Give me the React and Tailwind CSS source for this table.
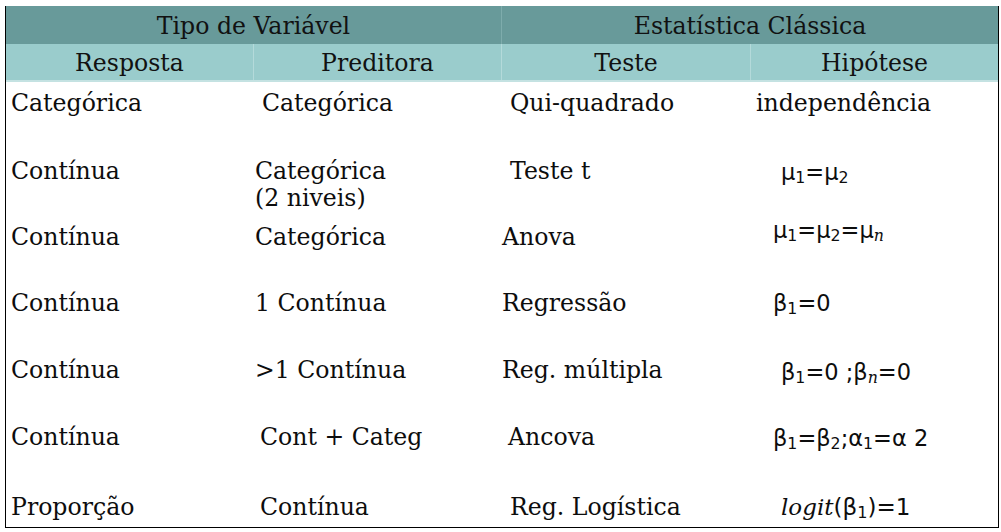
import React from 'react';

const rows = [
  { h: 'h-[67px]', pt: 'pt-[8px]', a: 'Categórica', b: 'Categórica', bx: 'pl-[8px]', c: 'Qui-quadrado', cx: 'pl-[8px]', d: 'independência', dx: 'pl-[5px]', serifD: true },
  { h: 'h-[66px]', pt: 'pt-[9px]', a: 'Contínua', b: 'Categórica\n(2 niveis)', bx: 'pl-[1px]', c: 'Teste t', cx: 'pl-[8px]', d: 'mu2', dx: 'pl-[30px]' },
  { h: 'h-[67px]', pt: 'pt-[9px]', a: 'Contínua', b: 'Categórica', bx: 'pl-[1px]', c: 'Anova', cx: 'pl-0', d: 'mun', dx: 'pl-[22px]' },
  { h: 'h-[66px]', pt: 'pt-[8px]', a: 'Contínua', b: '1 Contínua', bx: 'pl-[1px]', c: 'Regressão', cx: 'pl-0', d: 'b0', dx: 'pl-[22px]' },
  { h: 'h-[67px]', pt: 'pt-[9px]', a: 'Contínua', b: '>1 Contínua', bx: 'pl-[1px]', c: 'Reg. múltipla', cx: 'pl-0', d: 'bn', dx: 'pl-[30px]' },
  { h: 'h-[67px]', pt: 'pt-[9px]', a: 'Contínua', b: 'Cont + Categ', bx: 'pl-[6px]', c: 'Ancova', cx: 'pl-[6px]', d: 'ba', dx: 'pl-[22px]' },
  { h: 'h-[45px]', pt: 'pt-[12px]', a: 'Proporção', b: 'Contínua', bx: 'pl-[6px]', c: 'Reg. Logística', cx: 'pl-[8px]', d: 'logit', dx: 'pl-[30px]' },
];

const sub = (t, it) => (
  <sub className={`text-[0.7em] relative top-[0.2em] ${it ? 'italic font-["DejaVu_Serif"]' : ''}`}>{t}</sub>
);

function Formula({ kind }) {
  const cls = 'font-["DejaVu_Sans",sans-serif] text-[22.5px] leading-[27px] whitespace-nowrap relative';
  if (kind === 'mu2') return <span className={`${cls} top-[1px]`}>μ{sub('1')}=μ{sub('2')}</span>;
  if (kind === 'mun') return <span className={`${cls} -top-[7px]`}>μ{sub('1')}=μ{sub('2')}=μ{sub('n', true)}</span>;
  if (kind === 'b0') return <span className={cls}>β{sub('1')}=0</span>;
  if (kind === 'bn') return <span className={`${cls} top-[2px]`}>β{sub('1')}=0 ;β{sub('n', true)}=0</span>;
  if (kind === 'ba') return <span className={`${cls} top-[1px]`}>β{sub('1')}=β{sub('2')};α{sub('1')}=α 2</span>;
  if (kind === 'logit')
    return (
      <span className={`${cls} text-[23px]`}>
        <span className='italic font-["DejaVu_Serif"]'>logit</span>(β{sub('1')})=1
      </span>
    );
  return <span>{kind}</span>;
}

export default function App() {
  return (
    <div className='bg-white w-[1001px] h-[532px] pt-[6px] pl-[5px] font-["DejaVu_Serif",serif] text-[23.6px] text-[#111]'>
      <div className="w-[994px] border-l border-r border-b border-black">
        <div className="flex h-[38px] bg-[#689a9a]">
          <div className="w-[496px] flex items-center justify-center pt-[3px] border-r border-[#7eacac]">Tipo de Variável</div>
          <div className="flex-1 flex items-center justify-center pt-[3px]">Estatística Clássica</div>
        </div>
        <div className="flex h-[38px] bg-[#9acccc] border-b-2 border-[#c4e2e2]">
          <div className="w-[248px] flex items-center justify-center pt-[4px] border-r border-[#b4dada]">Resposta</div>
          <div className="w-[248px] flex items-center justify-center pt-[4px] border-r border-[#b4dada]">Preditora</div>
          <div className="w-[249px] flex items-center justify-center pt-[4px] border-r border-[#b4dada]">Teste</div>
          <div className="flex-1 flex items-center justify-center pt-[4px]">Hipótese</div>
        </div>
        {rows.map((r, i) => (
          <div key={i} className={`flex ${r.h} ${r.pt} leading-[27px] text-[#0d0d0d]`}>
            <div className="w-[248px] pl-[5px]">{r.a}</div>
            <div className={`w-[248px] ${r.bx} whitespace-pre-line`}>{r.b}</div>
            <div className={`w-[249px] ${r.cx}`}>{r.c}</div>
            <div className={`flex-1 ${r.dx}`}>{r.serifD ? r.d : <Formula kind={r.d} />}</div>
          </div>
        ))}
      </div>
    </div>
  );
}
